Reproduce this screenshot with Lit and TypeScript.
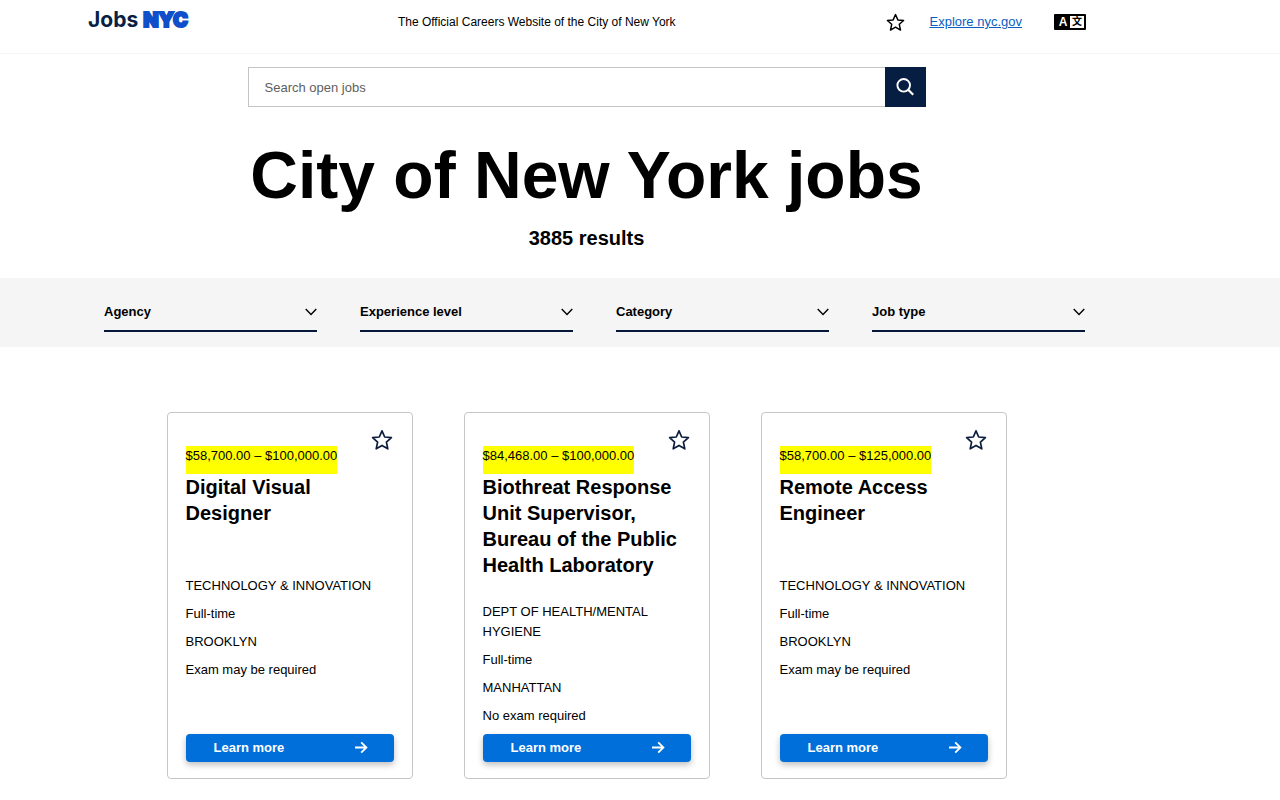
import { LitElement, html, css, svg } from "lit";
import { customElement, property } from "lit/decorators.js";

interface Job {
  salary: string;
  title: string;
  agency: string;
  schedule: string;
  borough: string;
  exam: string;
}

const JOBS: Job[] = [
  {
    salary: "$58,700.00 – $100,000.00",
    title: "Digital Visual Designer",
    agency: "TECHNOLOGY & INNOVATION",
    schedule: "Full-time",
    borough: "BROOKLYN",
    exam: "Exam may be required",
  },
  {
    salary: "$84,468.00 – $100,000.00",
    title: "Biothreat Response Unit Supervisor, Bureau of the Public Health Laboratory",
    agency: "DEPT OF HEALTH/MENTAL HYGIENE",
    schedule: "Full-time",
    borough: "MANHATTAN",
    exam: "No exam required",
  },
  {
    salary: "$58,700.00 – $125,000.00",
    title: "Remote Access Engineer",
    agency: "TECHNOLOGY & INNOVATION",
    schedule: "Full-time",
    borough: "BROOKLYN",
    exam: "Exam may be required",
  },
];

const FILTERS = ["Agency", "Experience level", "Category", "Job type"];

const starPath = svg`<path d="M11 1.8 L13.7 8 L20.4 8.7 L15.4 13.1 L16.8 19.8 L11 16.4 L5.2 19.8 L6.6 13.1 L1.6 8.7 L8.3 8 Z"
  fill="none" stroke="currentColor" stroke-width="1.7" stroke-linejoin="round"/>`;

@customElement("job-card")
export class JobCard extends LitElement {
  @property({ attribute: false }) job!: Job;

  static styles = css`
    :host {
      display: flex;
    }
    .card {
      position: relative;
      box-sizing: border-box;
      flex: 1;
      display: flex;
      flex-direction: column;
      align-items: flex-start;
      padding: 33px 18px 16px;
      border: 1px solid #c6c6c6;
      border-radius: 4px;
      background: #fff;
      line-height: 20px;
    }
    .save {
      position: absolute;
      top: 16px;
      right: 19px;
      width: 22px;
      height: 22px;
      padding: 0;
      border: 0;
      background: none;
      color: #0b1c3d;
      cursor: pointer;
    }
    .save svg {
      display: block;
    }
    .salary {
      margin: 0;
      padding-bottom: 8px;
      background: #ffff00;
    }
    .title {
      margin: 0;
      min-height: 78px;
      font-size: 20px;
      line-height: 26px;
      font-weight: 700;
    }
    .facts {
      list-style: none;
      margin: 24px 0 0;
      padding: 0;
    }
    .facts li {
      margin-bottom: 8px;
    }
    .more {
      box-sizing: border-box;
      align-self: stretch;
      display: flex;
      align-items: center;
      justify-content: space-between;
      margin-top: auto;
      padding: 4px 26px 4px 28px;
      border-radius: 4px;
      background: #006fda;
      box-shadow: 0 3px 6px rgba(0, 0, 0, 0.25);
      color: #fff;
      font-weight: 700;
      text-decoration: none;
    }
  `;

  render() {
    const j = this.job;
    return html`
      <article class="card">
        <button class="save" aria-label="Save job">
          <svg width="22" height="22" viewBox="0 0 22 22" aria-hidden="true">${starPath}</svg>
        </button>
        <p class="salary">${j.salary}</p>
        <h2 class="title">${j.title}</h2>
        <ul class="facts">
          <li>${j.agency}</li>
          <li>${j.schedule}</li>
          <li>${j.borough}</li>
          <li>${j.exam}</li>
        </ul>
        <a class="more" href="#">
          Learn more
          <svg width="14" height="14" viewBox="0 0 14 14" aria-hidden="true">
            <path d="M1 6.5H12.2M7.2 1.4L12.4 6.5L7.2 11.6" fill="none" stroke="#fff" stroke-width="1.8" />
          </svg>
        </a>
      </article>
    `;
  }
}

@customElement("app-root")
export class AppRoot extends LitElement {
  static styles = css`
    :host {
      display: block;
      min-height: 100vh;
      background: #fff;
      color: #000;
      font-family: "Liberation Sans", Arial, Helvetica, sans-serif;
      font-size: 13px;
      line-height: 20px;
    }
    .header {
      border-bottom: 1px solid #f5f5f5;
    }
    .bar {
      box-sizing: border-box;
      display: flex;
      align-items: center;
      justify-content: space-between;
      min-height: 53px;
      margin-right: 107px;
      padding: 0 87px 9px 88px;
    }
    .right {
      display: flex;
      align-items: center;
    }
    .logo {
      display: flex;
      align-items: center;
      gap: 5px;
      margin-bottom: 4px;
      color: #0b1f45;
      font-family: Inter, sans-serif;
      font-size: 21px;
      font-weight: 700;
      text-decoration: none;
    }
    .nyc {
      color: #0f4fc9;
      font-size: 20px;
      font-weight: 900;
      -webkit-text-stroke: 2px #0f4fc9;
    }
    .tagline {
      margin: 0;
      font-size: 12px;
    }
    .icon-button {
      display: block;
      padding: 0;
      border: 0;
      background: none;
      color: #000;
      cursor: pointer;
    }
    .icon-button svg {
      display: block;
    }
    .explore {
      margin: 0 32px 0 25px;
      color: #0a5fbf;
    }
    .lang {
      box-sizing: border-box;
      display: flex;
      width: 32px;
      height: 16px;
      padding: 0;
      border: 2px solid #000;
      border-radius: 1px;
      background: #fff;
      color: #000;
      font-family: "Liberation Sans", "Noto Sans CJK SC", sans-serif;
      font-size: 12px;
      font-weight: 700;
      line-height: 12px;
      cursor: pointer;
    }
    .lang span {
      flex: 1;
      text-align: center;
    }
    .lang .from {
      background: #000;
      color: #fff;
    }
    .lang .to {
      font-size: 10px;
    }
    .hero {
      margin-right: 107px;
      padding: 13px 20px 29px;
      text-align: center;
    }
    .search {
      display: flex;
      max-width: 678px;
      margin: 0 auto;
    }
    .search-input {
      box-sizing: border-box;
      flex: 1;
      min-width: 0;
      height: 40px;
      padding: 0 16px;
      border: 1px solid #c4c4c4;
      border-right: 0;
      border-radius: 0;
      background: #fff;
      color: #000;
      font: inherit;
    }
    .search-input::placeholder {
      color: #606060;
      opacity: 1;
    }
    .search-button {
      display: grid;
      place-items: center;
      width: 41px;
      height: 40px;
      padding: 0;
      border: 0;
      background: #051e42;
      cursor: pointer;
    }
    .heading {
      margin: 28px 0 0;
      font-size: 66px;
      line-height: 80px;
      font-weight: 700;
    }
    .count {
      margin: 12px 0 0;
      font-size: 20px;
      line-height: 22px;
      font-weight: 700;
    }
    .filters {
      background: #f5f5f5;
    }
    .filter-row {
      display: grid;
      grid-template-columns: repeat(4, 1fr);
      gap: 43px;
      margin-right: 107px;
      padding: 18px 88px 15px 104px;
    }
    .filter {
      display: grid;
      align-items: center;
      padding-bottom: 2px;
      border-bottom: 2px solid #05183b;
    }
    .filter select,
    .filter svg {
      grid-area: 1 / 1;
    }
    .filter svg {
      justify-self: end;
      pointer-events: none;
    }
    .filter select {
      appearance: none;
      width: 100%;
      height: 32px;
      margin: 0;
      padding: 0 20px 0 0;
      border: 0;
      border-radius: 0;
      background: transparent;
      color: #000;
      font: inherit;
      font-weight: 700;
    }
    .results {
      display: grid;
      grid-template-columns: repeat(3, 1fr);
      gap: 51px;
      max-width: 840px;
      margin: 0 auto;
    }
    .results-wrap {
      margin-right: 107px;
      padding: 65px 20px 21px;
    }
  `;

  render() {
    return html`
      <header class="header">
        <div class="bar">
          <a class="logo" href="#"><span>Jobs</span><span class="nyc">NYC</span></a>
          <p class="tagline">The Official Careers Website of the City of New York</p>
          <div class="right">
            <button class="icon-button" aria-label="Saved jobs">
              <svg width="19" height="19" viewBox="0 0 22 22" aria-hidden="true">${starPath}</svg>
            </button>
            <a class="explore" href="#">Explore nyc.gov</a>
            <button class="lang" aria-label="Translate">
              <span class="from">A</span><span class="to">文</span>
            </button>
          </div>
        </div>
      </header>
      <main>
        <section class="hero">
          <form class="search" role="search">
            <input class="search-input" type="text" placeholder="Search open jobs" aria-label="Search open jobs" />
            <button class="search-button" type="button" aria-label="Search">
              <svg width="20" height="20" viewBox="0 0 20 20" aria-hidden="true">
                <circle cx="8.7" cy="8.3" r="6.3" fill="none" stroke="#fff" stroke-width="1.9" />
                <path d="M13.2 12.8L18.2 17.8" stroke="#fff" stroke-width="2.2" />
              </svg>
            </button>
          </form>
          <h1 class="heading">City of New York jobs</h1>
          <p class="count">3885 results</p>
        </section>
        <section class="filters">
          <div class="filter-row">
            ${FILTERS.map(
              (name) => html`
                <div class="filter">
                  <select aria-label=${name}>
                    <option>${name}</option>
                  </select>
                  <svg width="12" height="8" viewBox="0 0 12 8" aria-hidden="true">
                    <path d="M0.7 1L6 6.4L11.3 1" fill="none" stroke="#000" stroke-width="1.4" />
                  </svg>
                </div>
              `
            )}
          </div>
        </section>
        <div class="results-wrap">
          <section class="results">${JOBS.map((job) => html`<job-card .job=${job}></job-card>`)}</section>
        </div>
      </main>
    `;
  }
}
